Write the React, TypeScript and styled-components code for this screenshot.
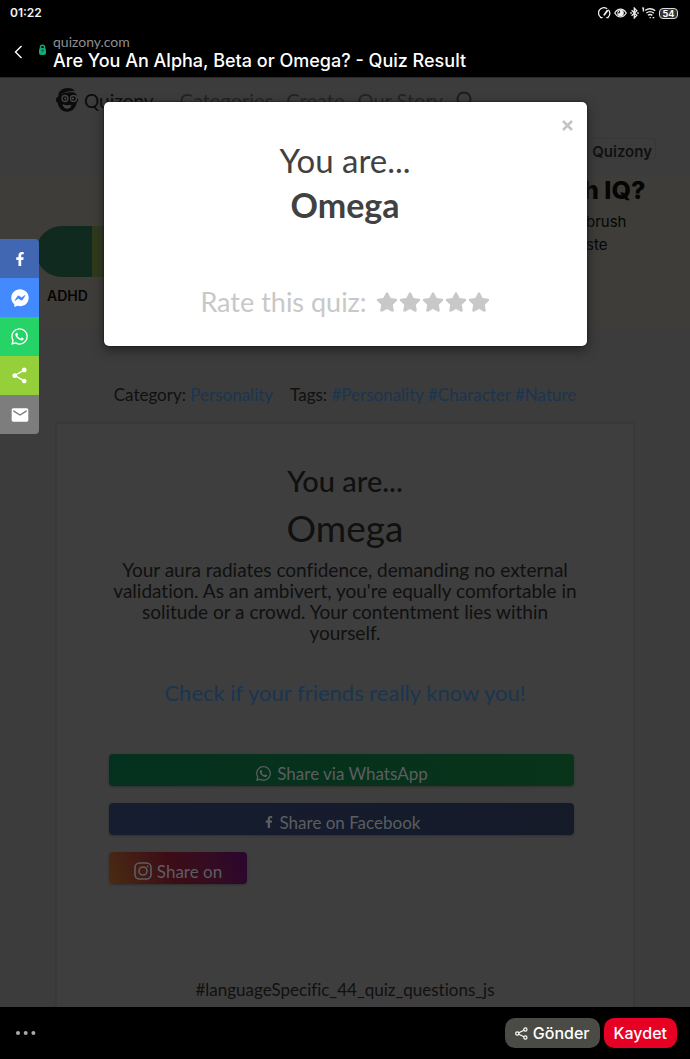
import React from "react";
import styled, { createGlobalStyle } from "styled-components";
import { FaFacebookF, FaFacebookMessenger, FaWhatsapp, FaStar } from "react-icons/fa";
import { MdShare, MdEmail } from "react-icons/md";

const GlobalStyle = createGlobalStyle`
  *, *::before, *::after { box-sizing: border-box; }
  body { margin: 0; background: #000; font-family: Lato, "Noto Sans", sans-serif; font-variant-ligatures: none; }
  h1, h2, h3, p { margin: 0; font-weight: 400; }
  a { color: inherit; text-decoration: none; }
  button { font: inherit; color: inherit; border: 0; padding: 0; background: none; cursor: pointer; }
  svg { display: block; flex: none; }
`;

const Screen = styled.div`
  display: flex;
  flex-direction: column;
  height: 100vh;
  background: #000;
`;

const StatusBar = styled.div`
  display: flex;
  align-items: center;
  justify-content: space-between;
  height: 26px;
  padding: 0 12px 0 10px;
  color: #f4f4f4;
`;

const Clock = styled.span`
  font: 600 12px/16px Inter, sans-serif;
`;

const StatusIcons = styled.div`
  display: flex;
  align-items: center;
  gap: 3px;
`;

const Battery = styled.span`
  display: flex;
  align-items: center;
  justify-content: center;
  width: 19px;
  height: 11px;
  border: 1px solid #ddd;
  border-radius: 4px;
  background: #333;
  color: #fff;
  font: 700 9px/9px Inter, sans-serif;
`;

const TitleBar = styled.header`
  display: flex;
  align-items: center;
  height: 51px;
  padding: 0 12px;
  color: #fff;
`;

const BackButton = styled.button`
  width: 26px;
`;

const Lock = styled.span`
  align-self: flex-start;
  width: 15px;
  padding-top: 18px;
`;

const Titles = styled.div`
  display: flex;
  flex-direction: column;
  white-space: nowrap;
`;

const Domain = styled.span`
  color: #8f8f8f;
  font: 400 14px/18px Lato, sans-serif;
`;

const PageTitle = styled.h1`
  font: 500 18px/20px Inter, sans-serif;
`;

const Viewport = styled.main`
  position: relative;
  flex: 1;
  min-height: 0;
  overflow: hidden;
  background: #3c3c3c;
  border-top: 1px solid #2a2a2a;
  color: #101010;
`;

const Nav = styled.nav`
  display: flex;
  align-items: center;
  height: 44px;
  padding: 0 55px;
  font-size: 20px;
`;

const Brand = styled.a`
  display: flex;
  align-items: center;
  gap: 5px;
  margin-right: 26px;
  color: #0b0b0b;
  font-size: 19px;
`;

const NavLink = styled.a`
  margin-right: 13px;
  color: #222;
`;

const FollowRow = styled.div`
  display: flex;
  justify-content: flex-end;
  height: 54px;
  padding: 16px 34px 0 0;
`;

const FollowButton = styled.a`
  height: 21px;
  padding: 0 3px 0 30px;
  border: 1px solid #373737;
  border-radius: 3px;
  font: 600 15px/26px Inter, sans-serif;
`;

const Banner = styled.section`
  display: flex;
  justify-content: space-between;
  height: 151px;
  background: #3e3d39;
  color: #050505;
  font-family: Inter, sans-serif;
`;

const Spectrum = styled.div`
  width: 200px;
  margin: 50px 0 0 36px;
`;

const Pill = styled.div`
  height: 51px;
  border-radius: 26px 0 0 26px;
  background: linear-gradient(to right, #102a20 0 56px, #2f3a1c 56px);
`;

const PillLabel = styled.p`
  padding: 10px 11px;
  font-size: 14px;
  font-weight: 600;
  line-height: 17px;
`;

const BannerCopy = styled.div`
  width: 107px;
`;

const BannerTitle = styled.h2`
  font-size: 25px;
  font-weight: 800;
  line-height: 28px;
  white-space: nowrap;
`;

const BannerText = styled.p`
  padding: 6px 3px;
  font-size: 15px;
  line-height: 23px;
`;

const Meta = styled.p`
  display: flex;
  justify-content: center;
  gap: 17px;
  padding: 57px 0 16px;
  font-size: 17px;
  line-height: 22px;
`;

const BlueLink = styled.a`
  color: #1a3550;
`;

const Card = styled.article`
  margin: 0 55px;
  padding: 40px 49px;
  border: 2px solid #393939;
  background: #3e3e3e;
  text-align: center;
`;

const CardLead = styled.h2`
  font: 500 29px/34px Lato, sans-serif;
`;

const CardResult = styled.h3`
  margin-top: 8px;
  font-size: 37px;
  line-height: 44px;
`;

const Description = styled.p`
  margin-top: 9px;
  font-size: 19px;
  line-height: 21px;
`;

const Challenge = styled.p`
  margin-top: 36px;
  font-size: 22px;
  line-height: 28px;
`;

const Shares = styled.div`
  display: flex;
  flex-direction: column;
  align-items: flex-start;
  gap: 17px;
  margin: 47px 10px 0 3px;
`;

const ShareButton = styled.button<{ $fill: string; $short?: boolean }>`
  display: flex;
  align-items: center;
  justify-content: center;
  gap: 5px;
  width: ${(p) => (p.$short ? "138px" : "100%")};
  height: 32px;
  padding-top: 6px;
  border-radius: 4px;
  background: ${(p) => p.$fill};
  box-shadow: 0 1px 2px #303030;
  color: #5b5f60;
  font-size: 17px;
`;

const Footnote = styled.p`
  margin-top: 95px;
  font-size: 17px;
  line-height: 22px;
`;

const Modal = styled.div`
  position: absolute;
  top: 24px;
  left: 15%;
  right: 15%;
  display: flex;
  flex-direction: column;
  align-items: center;
  height: 244px;
  padding-top: 37px;
  border-radius: 5px;
  background: #fff;
  box-shadow: 0 0 2px #111, 0 4px 12px #222;
  color: #414141;
`;

const CloseButton = styled.button`
  position: absolute;
  top: 18px;
  right: 14px;
`;

const ModalLead = styled.h2`
  font-size: 33px;
  line-height: 42px;
`;

const ModalResult = styled.h3`
  font-size: 34px;
  font-weight: 700;
  line-height: 48px;
`;

const Rating = styled.div`
  display: flex;
  align-items: center;
  margin-top: 56px;
  color: #c8c8c8;
  font-size: 27px;
  line-height: 34px;
`;

const Stars = styled.div`
  display: flex;
  gap: 1px;
  margin-left: 9px;
`;

const Rail = styled.aside`
  position: absolute;
  top: 161px;
  left: 0;
  overflow: hidden;
  border-radius: 0 4px 4px 0;
`;

const RailButton = styled.button<{ $fill: string }>`
  display: flex;
  align-items: center;
  justify-content: center;
  width: 39px;
  height: 39px;
  background: ${(p) => p.$fill};
  color: #fff;
`;

const BottomBar = styled.footer`
  display: flex;
  align-items: center;
  gap: 4px;
  height: 52px;
  padding: 0 13px 0 16px;
  color: #fff;
`;

const MoreButton = styled.button`
  margin-right: auto;
`;

const PillButton = styled.button<{ $fill: string }>`
  display: flex;
  align-items: center;
  gap: 5px;
  height: 30px;
  padding: 0 10px;
  border-radius: 10px;
  background: ${(p) => p.$fill};
  font: 500 16px/30px Inter, sans-serif;
`;

const Gauge = () => (
  <svg width="13" height="12" viewBox="0 0 13 12" fill="none" stroke="#eee" strokeWidth="1.3" strokeLinecap="round">
    <path d="M3 10.5A5.2 5.2 0 1 1 8.7 1.5M10.7 3.2a5.2 5.2 0 0 1-.9 7.3M2.6 10.6h1.6M8.8 10.6h1.4" />
    <path d="M6.3 7.8 9.4 3.6" strokeWidth="1.8" />
  </svg>
);

const Eye = () => (
  <svg width="13" height="12" viewBox="0 0 14 12" fill="none" stroke="#eee" strokeWidth="1.3">
    <path d="M.8 6C2.6 3 4.6 1.8 7 1.8S11.4 3 13.2 6C11.4 9 9.4 10.2 7 10.2S2.6 9 .8 6Z" />
    <circle cx="7" cy="6" r="2.9" fill="#eee" />
    <path d="M6 3.5v2.3h-2" stroke="#000" strokeWidth="1" />
  </svg>
);

const Bluetooth = () => (
  <svg width="9" height="12" viewBox="0 0 9 12" fill="none" stroke="#eee" strokeWidth="1.3">
    <path d="m1.6 3.3 5.2 5L4.3 10.900V1.1l2.5 2.6-5.2 5" />
    <path d="M.3 6h1.500M7.200 6h1.500" strokeWidth="1.5" />
  </svg>
);

const Wifi = () => (
  <svg width="14" height="12" viewBox="0 0 14 12" fill="none" stroke="#eee" strokeWidth="1.4">
    <path d="M3.300 3.400c3-2 7-1.800 9.900.4M4.400 6c2.300-1.700 5.300-1.600 7.500.2M6 8.300c1.300-1 3-1 4.300.1" />
    <path d="M1.400.5v4M.3 1.600 1.400.5M7.600 10.600h1.300M10.600 10.600h1.700" />
  </svg>
);

const Mascot = () => (
  <svg width="24" height="26" viewBox="0 0 24 26">
    <path
      d="M3.500 8.500C3 4 8 .8 13 .9c3 0 5.500 1 7 2.900C18 3.700 9 4.500 5.500 8c4-2.500 9-3.200 14-2.400 1.600 1.200 2.500 3 2.500 5.400 1.600.8 1.500 3.700-.2 4.300C21 21 17 24.800 12 24.800S3.500 21 2.600 15.600C.4 14.600.3 11 2.600 10.200Z"
      fill="#0b0b0b"
    />
    <circle cx="10" cy="11.500" r="3" fill="none" stroke="#444" strokeWidth="1.300" />
    <circle cx="18.500" cy="11.500" r="3" fill="none" stroke="#444" strokeWidth="1.300" />
    <circle cx="10.300" cy="11.500" r="1" fill="#555" />
    <circle cx="18" cy="11.500" r="1" fill="#555" />
    <path d="M7.500 17c3 1.500 6 1.600 9 .8-.7 5.500-8 5.500-9-.8Z" fill="#444" />
  </svg>
);

const InstagramIcon = () => (
  <svg width="18" height="18" viewBox="0 0 18 18" fill="none" stroke="currentColor" strokeWidth="1.6">
    <rect x="1" y="1" width="16" height="16" rx="4.500" />
    <circle cx="9" cy="9" r="4" />
    <circle cx="13.600" cy="4.500" r=".6" fill="currentColor" strokeWidth=".8" />
  </svg>
);

const rail = [
  { name: "Facebook", fill: "#4267b2", icon: <FaFacebookF size={14} /> },
  { name: "Messenger", fill: "#448aff", icon: <FaFacebookMessenger size={18} /> },
  { name: "WhatsApp", fill: "#25d366", icon: <FaWhatsapp size={19} /> },
  { name: "Share", fill: "#95d03a", icon: <MdShare size={19} /> },
  { name: "Email", fill: "#7d7d7d", icon: <MdEmail size={20} /> },
];

export default function App() {
  return (
    <Screen>
      <GlobalStyle />
      <StatusBar>
        <Clock>01:22</Clock>
        <StatusIcons>
          <Gauge />
          <Eye />
          <Bluetooth />
          <Wifi />
          <Battery>54</Battery>
        </StatusIcons>
      </StatusBar>
      <TitleBar>
        <BackButton aria-label="Back">
          <svg width="12" height="14" viewBox="0 0 12 14" fill="none" stroke="#fff" strokeWidth="1.4">
            <path d="M9.500 1 3.500 7l6 6" />
          </svg>
        </BackButton>
        <Lock>
          <svg width="9" height="12" viewBox="0 0 9 12">
            <path d="M2.500 5V3.300a2 2 0 0 1 4 0V5" fill="none" stroke="#14a877" strokeWidth="1.5" />
            <rect x="1" y="4" width="7" height="7" rx="2" fill="#14a877" />
            <circle cx="4.500" cy="6.500" r="1" fill="#075a3d" />
          </svg>
        </Lock>
        <Titles>
          <Domain>quizony.com</Domain>
          <PageTitle>Are You An Alpha, Beta or Omega? - Quiz Result</PageTitle>
        </Titles>
      </TitleBar>

      <Viewport>
        <Nav>
          <Brand href="#home">
            <Mascot />
            Quizony
          </Brand>
          <NavLink href="#categories">Categories</NavLink>
          <NavLink href="#create">Create</NavLink>
          <NavLink href="#story">Our Story</NavLink>
          <button aria-label="Search">
            <svg width="18" height="18" viewBox="0 0 18 18" fill="none" stroke="#1c1c1c" strokeWidth="2">
              <circle cx="8" cy="8" r="6.500" />
              <path d="m13 13 4 4" />
            </svg>
          </button>
        </Nav>
        <FollowRow>
          <FollowButton href="#follow">Quizony</FollowButton>
        </FollowRow>
        <Banner>
          <Spectrum>
            <Pill />
            <PillLabel>ADHD</PillLabel>
          </Spectrum>
          <BannerCopy>
            <BannerTitle>h IQ?</BannerTitle>
            <BannerText>
              brush
              <br />
              ste
            </BannerText>
          </BannerCopy>
        </Banner>
        <Meta>
          <span>
            Category: <BlueLink href="#personality">Personality</BlueLink>
          </span>
          <span>
            Tags: <BlueLink href="#tag-personality">#Personality</BlueLink>{" "}
            <BlueLink href="#tag-character">#Character</BlueLink> <BlueLink href="#tag-nature">#Nature</BlueLink>
          </span>
        </Meta>
        <Card>
          <CardLead>You are...</CardLead>
          <CardResult>Omega</CardResult>
          <Description>
            Your aura radiates confidence, demanding no external validation. As an ambivert, you're equally comfortable
            in solitude or a crowd. Your contentment lies within yourself.
          </Description>
          <Challenge>
            <BlueLink href="#friends">Check if your friends really know you!</BlueLink>
          </Challenge>
          <Shares>
            <ShareButton $fill="linear-gradient(to right, #04301f, #08341a)">
              <FaWhatsapp size={17} />
              Share via WhatsApp
            </ShareButton>
            <ShareButton $fill="linear-gradient(to right, #161d30, #141a28)">
              <FaFacebookF size={12} />
              Share on Facebook
            </ShareButton>
            <ShareButton $short $fill="linear-gradient(70deg, #4a2b12, #3d0d17 45%, #350c20 70%, #2a0630)">
              <InstagramIcon />
              Share on
            </ShareButton>
          </Shares>
          <Footnote>#languageSpecific_44_quiz_questions_js</Footnote>
        </Card>

        <Modal role="dialog" aria-label="Quiz result">
          <CloseButton aria-label="Close">
            <svg width="11" height="11" viewBox="0 0 11 11" stroke="#c4c4c4" strokeWidth="2.6">
              <path d="m1 1 9 9M10 1l-9 9" />
            </svg>
          </CloseButton>
          <ModalLead>You are...</ModalLead>
          <ModalResult>Omega</ModalResult>
          <Rating>
            Rate this quiz:
            <Stars>
              {[1, 2, 3, 4, 5].map((n) => (
                <button key={n} aria-label={`${n} stars`}>
                  <FaStar size={22} />
                </button>
              ))}
            </Stars>
          </Rating>
        </Modal>

        <Rail>
          {rail.map((item) => (
            <RailButton key={item.name} $fill={item.fill} aria-label={item.name}>
              {item.icon}
            </RailButton>
          ))}
        </Rail>
      </Viewport>

      <BottomBar>
        <MoreButton aria-label="More">
          <svg width="20" height="6" viewBox="0 0 20 6" fill="#aaa">
            <circle cx="2" cy="3" r="2" />
            <circle cx="9.700" cy="3" r="2" />
            <circle cx="17.400" cy="3" r="2" />
          </svg>
        </MoreButton>
        <PillButton $fill="#4a4b44">
          <svg width="13" height="13" viewBox="0 0 13 13" fill="none" stroke="#fff" strokeWidth="1.2">
            <circle cx="2.300" cy="6.500" r="1.600" />
            <circle cx="10.400" cy="2.500" r="1.600" />
            <circle cx="10.400" cy="10.500" r="1.600" />
            <path d="m3.800 5.800 5.100-2.600M3.800 7.200l5.100 2.600" />
          </svg>
          Gönder
        </PillButton>
        <PillButton $fill="#e60023">Kaydet</PillButton>
      </BottomBar>
    </Screen>
  );
}
